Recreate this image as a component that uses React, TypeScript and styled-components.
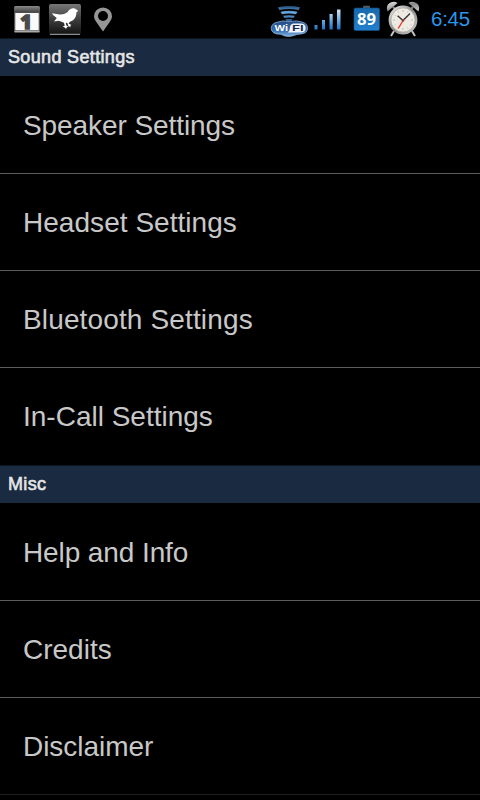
import React from 'react';
import styled, { createGlobalStyle } from 'styled-components';

const GlobalStyle = createGlobalStyle`
  html, body { margin: 0; background: #000; overflow: hidden; }
  * { box-sizing: border-box; }
`;

const Screen = styled.main`
  width: 480px;
  height: 800px;
  overflow: hidden;
  background: #000;
  font-family: 'Liberation Sans', Arial, sans-serif;
`;

const StatusBar = styled.header`
  height: 38px;
  display: flex;
  justify-content: space-between;
  padding: 0 10px 0 12px;
`;

const Group = styled.div`
  display: flex;
  align-items: flex-start;
`;

const Icon = styled.svg<{ $left?: number }>`
  display: block;
  flex: none;
  margin-left: ${(p) => p.$left ?? 0}px;
`;

const Clock = styled.time`
  margin-left: 10px;
  width: 39px;
  line-height: 38px;
  font-size: 20.5px;
  letter-spacing: -0.25px;
  white-space: nowrap;
  color: #2d96ea;
`;

const SectionTitle = styled.h2`
  margin: 0 0 1px;
  height: 38px;
  padding-left: 8px;
  border-top: 1px solid #0d1520;
  background: #1a2a40;
  color: #e6e6e6;
  font-size: 18px;
  font-weight: 400;
  line-height: 36px;
  letter-spacing: 0.34px;
  -webkit-text-stroke: 0.6px #e6e6e6;
`;

const List = styled.ul`
  margin: 0;
  padding: 0;
  list-style: none;
`;

const Item = styled.li<{ $divider: string; $tracking: number }>`
  height: 97px;
  padding-left: 23px;
  border-bottom: 1px solid ${(p) => p.$divider};
  color: #c8c8c8;
  font-size: 28px;
  line-height: 97px;
  letter-spacing: ${(p) => p.$tracking}px;
`;

const CalendarIcon = () => (
  <Icon width="30" height="38" viewBox="12 0 30 38">
    <defs>
      <linearGradient id="calTop" x1="0" y1="0" x2="0" y2="1">
        <stop offset="0" stopColor="#8a8a8a" />
        <stop offset="0.2" stopColor="#4c4c4c" />
        <stop offset="1" stopColor="#555" />
      </linearGradient>
    </defs>
    <rect x="14" y="6" width="26" height="26.5" rx="1.5" fill="url(#calTop)" />
    <rect x="15.3" y="13" width="23.4" height="17.3" fill="#fafafa" />
    <path d="M14.5 31.7h25" stroke="#b5b5b5" strokeWidth="1.2" />
    <text x="26" y="28.7" textAnchor="middle" fontFamily="Open Sans, sans-serif" fontWeight="800" fontSize="19.5" fill="#4b4b4b" stroke="#4b4b4b" strokeWidth="1.4">1</text>
  </Icon>
);

const BirdIcon = () => (
  <Icon width="32" height="38" viewBox="49 0 32 38" $left={7}>
    <defs>
      <linearGradient id="birdBg" x1="0" y1="0" x2="0" y2="1">
        <stop offset="0" stopColor="#777" />
        <stop offset="0.5" stopColor="#3d3d3d" />
        <stop offset="1" stopColor="#111" />
      </linearGradient>
    </defs>
    <rect x="49" y="4" width="32" height="31" rx="2" fill="url(#birdBg)" />
    <path d="M50 34.3h30" stroke="#aaa" />
    <path
      d="M52 13.2L58.5 14.2Q63 15 67.5 12.2Q69.3 8.7 72.8 8.2Q75 8 76 9.3L78.2 10.8L76.4 12.5Q76.4 17.5 73 20.2L69.6 22.1L68.6 23.5L71.4 25L70 26L71 27.2L68.4 26.2L67.3 22.8L65.8 23.1L66.4 25.6L68.3 26.8L66.9 27.3L66 29L64.8 27.5L62.6 26.8L64.7 25.8L64 22.7L61 21.4L58.5 20.8L54 21.5L56.8 18L53.3 15.2Z"
      fill="#fff"
    />
  </Icon>
);

const PinIcon = () => (
  <Icon width="20" height="38" viewBox="93 0 20 38" $left={12}>
    <path d="M103 31.5L96.3 22Q94 18.8 94 16.4A9 9 0 0 1 112 16.4Q112 18.8 109.7 22ZM103 11A5 5 0 1 0 103 21A5 5 0 1 0 103 11Z" fill="#969696" fillRule="evenodd" />
  </Icon>
);

const WifiIcon = () => (
  <Icon width="38" height="38" viewBox="270 0 38 38">
    <defs>
      <linearGradient id="waves" x1="0" y1="0" x2="0" y2="1">
        <stop offset="0" stopColor="#244974" />
        <stop offset="0.45" stopColor="#68a8e4" />
        <stop offset="1" stopColor="#265990" />
      </linearGradient>
      <linearGradient id="badge" x1="0" y1="0" x2="0" y2="1">
        <stop offset="0" stopColor="#244b85" />
        <stop offset="0.6" stopColor="#356db1" />
        <stop offset="1" stopColor="#83b4dd" />
      </linearGradient>
    </defs>
    <path d="M278 7.3Q289 4.6 300 7.3L298.7 10Q289 7.9 279.3 10ZM280.5 11.7Q289 9.8 297.5 11.7L296 14.2Q289 12.7 282 14.2ZM283 15.7Q289 14.6 295 15.7L293.5 18Q289 17.1 284.5 18ZM285.5 19.2Q289 18.6 292.5 19.2L291.5 21H286.5Z" fill="url(#waves)" />
    <path d="M278 22Q283 20 289 21.6Q297 20 302 22Q307.8 23.5 307.5 28.5Q307.5 33.4 301 34Q296 34.3 294 35.5Q287 38 281 34.3Q271.5 34.4 271.2 28.4Q271.5 23 278 22Z" fill="url(#badge)" stroke="#96b9df" strokeWidth="0.7" />
    <path d="M293 23.5H301Q305.7 23.5 305.7 28T301 32.6H287.5Q290 31 290 27.5Q290 24.5 293 23.5Z" fill="#f1f4fa" />
    <text x="274.5" y="31.2" fontFamily="Liberation Sans, sans-serif" fontWeight="700" fontSize="9" textLength="13.5" lengthAdjust="spacingAndGlyphs" fill="#fff">Wi</text>
    <text x="292" y="31.2" fontFamily="Liberation Sans, sans-serif" fontWeight="700" fontSize="9" textLength="11.5" lengthAdjust="spacingAndGlyphs" fill="#192d53">FI</text>
  </Icon>
);

const SignalIcon = () => (
  <Icon width="28" height="38" viewBox="314 0 28 38" $left={6}>
    <defs>
      <linearGradient id="bars" x1="0" y1="9" x2="0" y2="30" gradientUnits="userSpaceOnUse">
        <stop offset="0" stopColor="#d5e6f5" />
        <stop offset="0.5" stopColor="#71b0e5" />
        <stop offset="1" stopColor="#1270c6" />
      </linearGradient>
    </defs>
    <path d="M314.5 25h3v4.5h-3zM322 20h3v9.5h-3zM329.5 14h3.2v15.5h-3.2zM337 9.5h3.5v20H337z" fill="url(#bars)" />
  </Icon>
);

const BatteryIcon = () => (
  <Icon width="28" height="38" viewBox="353 0 28 38" $left={11}>
    <defs>
      <linearGradient id="battery" x1="0" y1="0" x2="0" y2="1">
        <stop offset="0" stopColor="#1769ad" />
        <stop offset="1" stopColor="#2380ce" />
      </linearGradient>
    </defs>
    <rect x="363" y="5.8" width="7" height="4" rx="1" fill="#555b63" />
    <rect x="354" y="8" width="25.5" height="22.5" rx="1.5" fill="url(#battery)" stroke="#105087" strokeWidth="0.6" />
    <text x="366.5" y="24.9" textAnchor="middle" fontFamily="Open Sans, sans-serif" fontWeight="700" fontSize="16" textLength="19" lengthAdjust="spacingAndGlyphs" fill="#fff">89</text>
  </Icon>
);

const AlarmIcon = () => (
  <Icon width="36" height="38" viewBox="385 0 36 38" $left={4}>
    <defs>
      <linearGradient id="metal" x1="0" y1="0" x2="1" y2="1">
        <stop offset="0" stopColor="#eee" />
        <stop offset="0.5" stopColor="#888" />
        <stop offset="1" stopColor="#ccc" />
      </linearGradient>
    </defs>
    <path d="M394 31L391 36M412 31L415 36" stroke="#c5c5c5" strokeWidth="2" />
    <path d="M393 7L396 10M413 7L410 10" stroke="#888" strokeWidth="2" />
    <path d="M387.6 11.5Q385.6 6.3 389 3.5Q393.2 .3 397.6 3ZM418.4 11.5Q420.4 6.3 417 3.5Q412.8 .3 408.4 3Z" fill="url(#metal)" />
    <circle cx="403" cy="20" r="13.3" fill="#eeece2" stroke="url(#metal)" strokeWidth="2.2" />
    <circle cx="403" cy="20" r="12" fill="none" stroke="#8a8882" strokeWidth="0.5" />
    <path d="M403 10v2M403 28v2M393 20h2M411 20h2M398 11.5l.6 1M408 11.5l-.6 1M398 28.5l.6-1M408 28.5l-.6-1M394.5 15l1 .6M394.5 25l1-.6M411.5 25l-1-.6" stroke="#aaa" strokeWidth="0.8" />
    <path d="M397.6 15.7L403 20.5L410 13.5" fill="none" stroke="#30353c" strokeWidth="1.4" />
    <path d="M404 19L398.2 28.5" stroke="#e63b2d" strokeWidth="1.4" />
    <circle cx="403" cy="20.5" r="1.2" fill="#884438" />
  </Icon>
);

const sections = [
  {
    title: 'Sound Settings',
    items: [
      { label: 'Speaker Settings', tracking: -0.08 },
      { label: 'Headset Settings', tracking: 0.04 },
      { label: 'Bluetooth Settings', tracking: 0.14 },
      { label: 'In-Call Settings', tracking: 0 },
    ],
    lastDivider: '#000',
  },
  {
    title: 'Misc',
    items: [
      { label: 'Help and Info', tracking: -0.1 },
      { label: 'Credits', tracking: 0 },
      { label: 'Disclaimer', tracking: -0.04 },
    ],
    lastDivider: '#202020',
  },
];

export default function App() {
  return (
    <>
      <GlobalStyle />
      <Screen>
        <StatusBar>
          <Group>
            <CalendarIcon />
            <BirdIcon />
            <PinIcon />
          </Group>
          <Group>
            <WifiIcon />
            <SignalIcon />
            <BatteryIcon />
            <AlarmIcon />
            <Clock>6:45</Clock>
          </Group>
        </StatusBar>
        {sections.map((section) => (
          <section key={section.title}>
            <SectionTitle>{section.title}</SectionTitle>
            <List>
              {section.items.map(({ label, tracking }, i) => (
                <Item
                  key={label}
                  $tracking={tracking}
                  $divider={i === section.items.length - 1 ? section.lastDivider : '#5c5c5c'}
                >
                  {label}
                </Item>
              ))}
            </List>
          </section>
        ))}
      </Screen>
    </>
  );
}
